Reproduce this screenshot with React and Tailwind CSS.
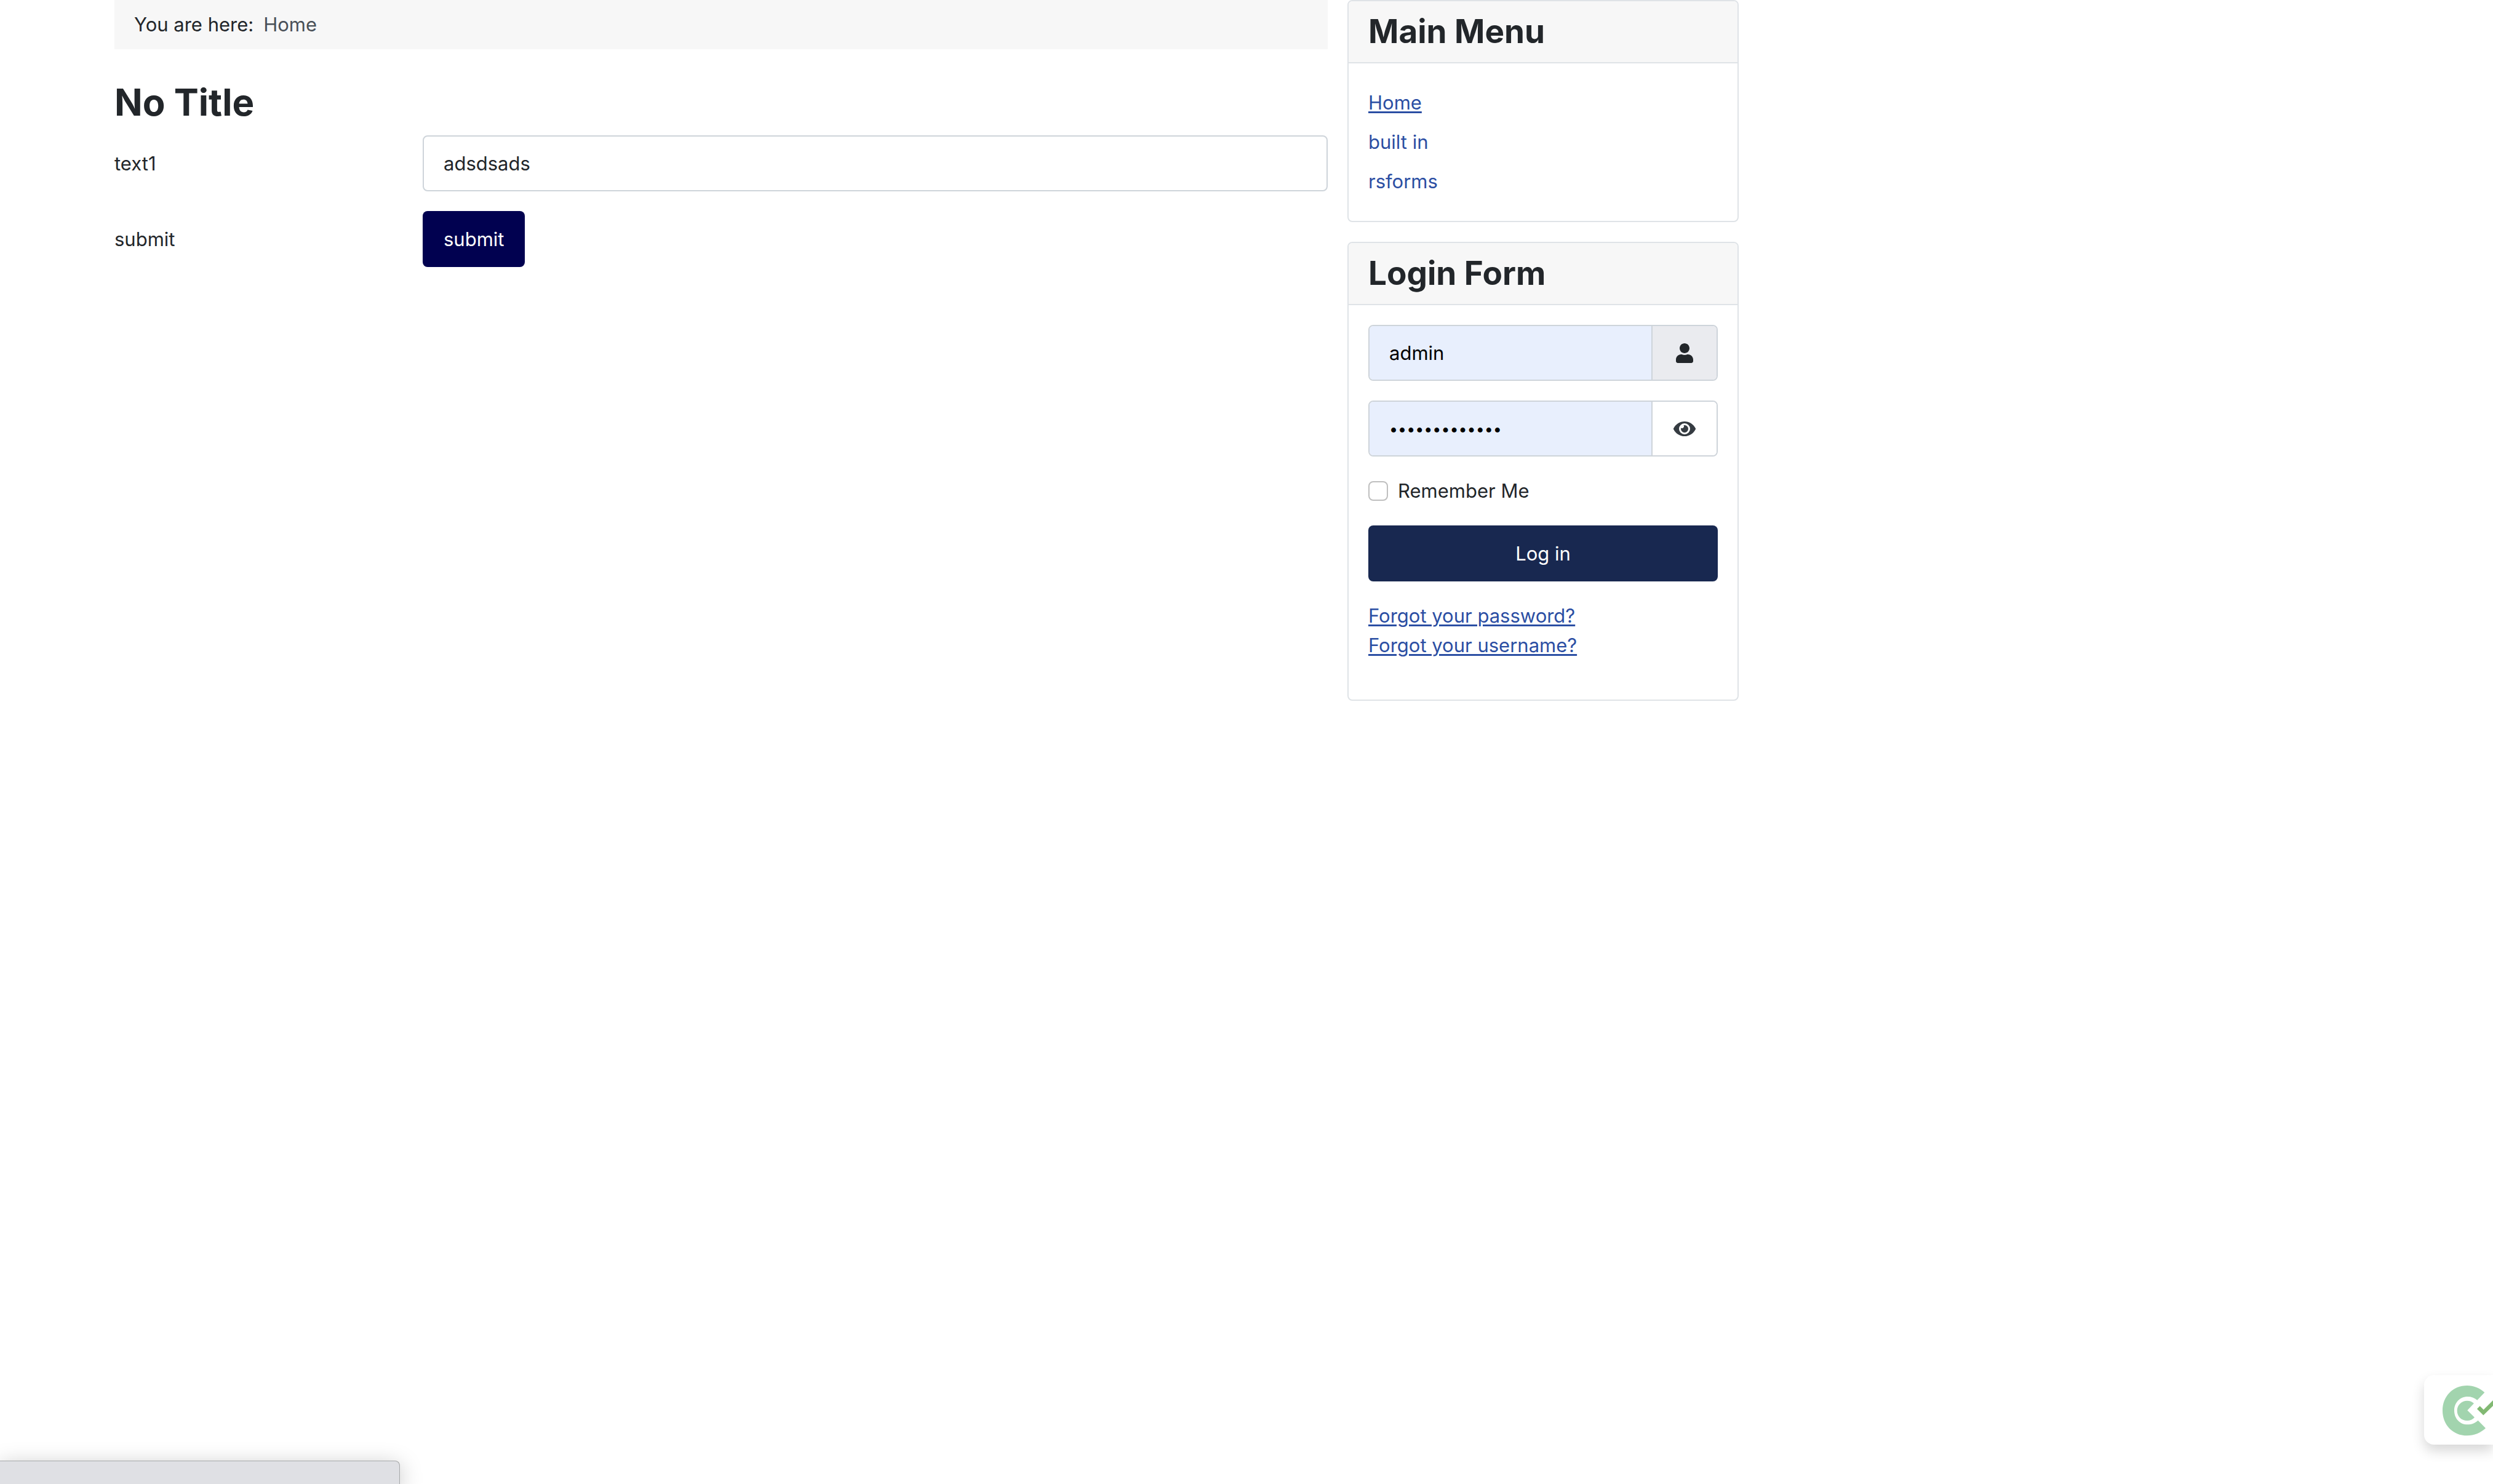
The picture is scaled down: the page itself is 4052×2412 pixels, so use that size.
import { FaUser, FaEye } from "react-icons/fa";

const fieldBorder = "border-2 border-[#ced4da]";
const underlined = "underline decoration-[3px] underline-offset-[3px]";

function Card({ title, children }) {
  return (
    <section className="overflow-hidden rounded-lg border-2 border-[#dfe3e7] bg-white">
      <h3 className="border-b-2 border-[#dfe3e7] bg-[#f7f7f7] px-8 py-4 text-[53px] leading-[67px] font-bold">
        {title}
      </h3>
      <div className="p-8">{children}</div>
    </section>
  );
}

function MainMenu() {
  return (
    <Card title="Main Menu">
      <ul className="text-[#2b4ea3]">
        <li className="py-2">
          <a href="#home" className={underlined}>Home</a>
        </li>
        <li className="py-2">
          <a href="#built-in">built in</a>
        </li>
        <li className="py-2">
          <a href="#rsforms">rsforms</a>
        </li>
      </ul>
    </Card>
  );
}

function LoginForm() {
  return (
    <Card title="Login Form">
      <form className="flex flex-col gap-8" onSubmit={(e) => e.preventDefault()}>
        <div className={`flex h-[91px] overflow-hidden rounded-lg ${fieldBorder}`}>
          <input
            type="text"
            aria-label="Username"
            defaultValue="admin"
            className="min-w-0 flex-1 bg-[#e8effd] px-8 text-black outline-none"
          />
          <span className="flex w-[106px] items-center justify-center border-l-2 border-[#ced4da] bg-[#eaebef]">
            <FaUser aria-hidden="true" className="size-8" />
          </span>
        </div>
        <div className={`flex h-[91px] overflow-hidden rounded-lg ${fieldBorder}`}>
          <input
            type="password"
            aria-label="Password"
            defaultValue="adminpassword"
            className="min-w-0 flex-1 bg-[#e8effd] px-8 text-[25px] text-black outline-none"
          />
          <button
            type="button"
            aria-label="Show password"
            className="flex w-[106px] items-center justify-center border-l-2 border-[#ced4da] bg-white text-[#353b41]"
          >
            <FaEye aria-hidden="true" className="h-8 w-9" />
          </button>
        </div>
        <div className="flex items-center gap-4">
          <input
            id="remember"
            type="checkbox"
            className="size-8 appearance-none rounded-lg border-2 border-[#bfbfbf] bg-white"
          />
          <label htmlFor="remember">Remember Me</label>
        </div>
        <button type="submit" className="h-[91px] rounded-lg bg-[#182850] text-white">
          Log in
        </button>
        <ul className="pb-8 text-[#2b4ea3]">
          <li>
            <a href="#reset" className={underlined}>Forgot your password?</a>
          </li>
          <li>
            <a href="#remind" className={underlined}>Forgot your username?</a>
          </li>
        </ul>
      </form>
    </Card>
  );
}

function ContentForm() {
  return (
    <form className="grid grid-cols-4 items-center gap-8" onSubmit={(e) => e.preventDefault()}>
      <label htmlFor="text1">text1</label>
      <input
        id="text1"
        type="text"
        defaultValue="adsdsads"
        className={`col-span-3 h-[91px] w-full rounded-lg bg-white px-8 outline-none ${fieldBorder}`}
      />
      <span>submit</span>
      <div className="col-span-3">
        <button type="submit" className="block h-[91px] rounded-lg bg-[#010150] px-[34px] text-white">
          submit
        </button>
      </div>
    </form>
  );
}

function ConsentWidget() {
  return (
    <button
      type="button"
      aria-label="Consent settings"
      className="fixed right-0 bottom-16 h-[113px] w-28 rounded-l-2xl bg-white shadow-[0_10px_20px_rgba(0,0,0,0.16)]"
    >
      <svg viewBox="120 104 336 339" className="block h-full w-full" aria-hidden="true">
        <path
          fill="#a2d4ae"
          d="M415 189C392 167 362 155 330 155C260 155 210 208 210 277C210 346 260 399 330 399C363 399 396 386 420 363L383 325C369 338 351 345 332 345C294 345 267 315 267 277C267 239 294 209 332 209C350 209 366 215 379 226Z"
        />
        <path
          fill="#a2d4ae"
          d="M363 242C354 233 343 229 330 229C302 229 281 250 281 277C281 305 302 326 330 326C344 326 357 320 366 310L331 276Z"
        />
        <path fill="#82b973" d="M378 269L392 255L410 273L456 227V254L409 300Z" />
      </svg>
    </button>
  );
}

export default function App() {
  return (
    <div className="min-h-screen overflow-hidden bg-white pl-[186px] font-[Inter,'Liberation_Sans',sans-serif] text-[31px] leading-[48px] text-[#22262a]">
      <div className="grid max-w-[2640px] grid-cols-12 items-start gap-8">
        <main className="col-span-9">
          <nav aria-label="Breadcrumb" className="flex gap-4 bg-[#f7f7f7] px-8 py-4">
            <span>You are here:</span>
            <span className="text-[#495057]">Home</span>
          </nav>
          <h1 className="pt-12 pb-4 text-[60px] leading-[76px] font-bold">No Title</h1>
          <ContentForm />
        </main>
        <aside className="col-span-3 flex flex-col gap-8">
          <MainMenu />
          <LoginForm />
        </aside>
      </div>
      <div className="fixed bottom-0 left-0 h-[38px] w-[650px] rounded-tr-lg border-t border-r border-[#a6a8a9] bg-[#dfe0e4] shadow-[0_8px_36px_rgba(0,0,0,0.25)]" />
      <ConsentWidget />
    </div>
  );
}
